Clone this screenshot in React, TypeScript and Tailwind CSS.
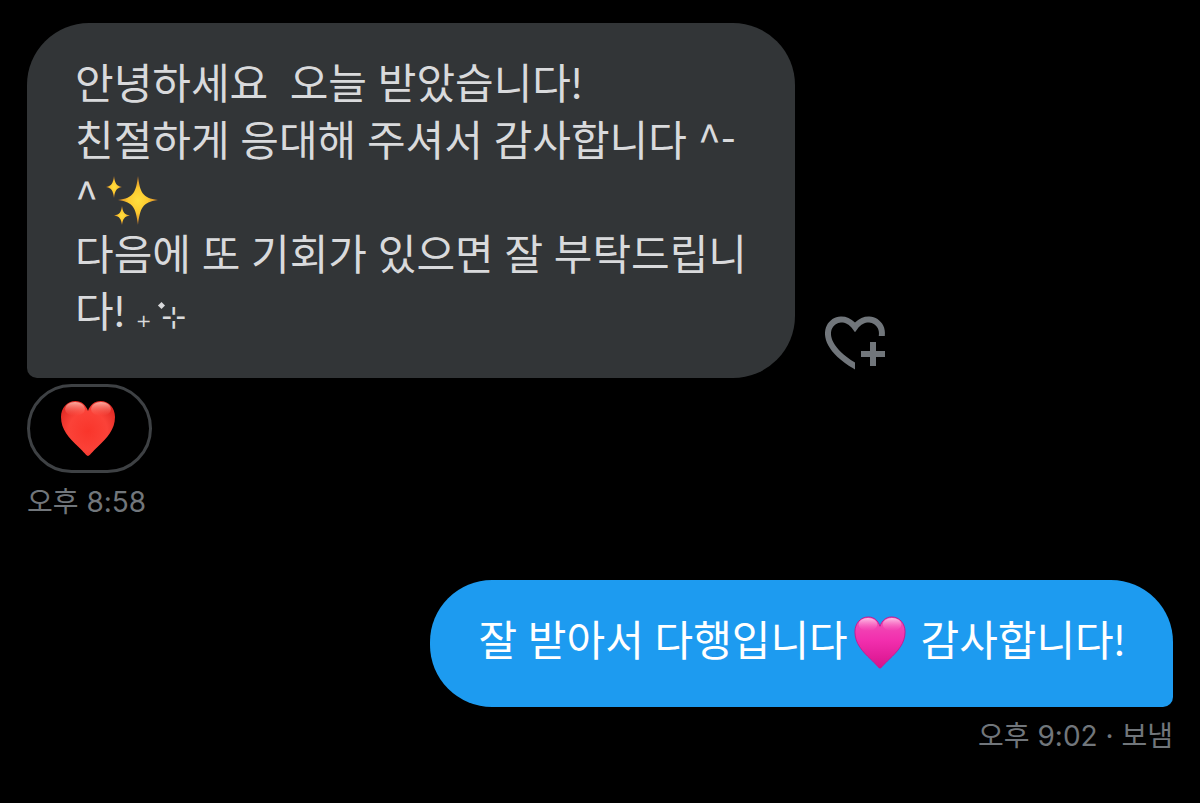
import { useId } from 'react'
import type { ReactNode } from 'react'
import { clsx } from 'clsx'

type BubbleProps = {
  side: 'in' | 'out'
  children: ReactNode
}

const HEART_PATH =
  'M28 56C26.500 56 24 52 18 46.500C9 38 1 29.500 1 17C1 8 7 1 15.500 1C21.500 1 26 5 28 11C30 5 34.500 1 40.500 1C49 1 55 8 55 17C55 29.500 47 38 38 46.500C32 52 29.500 56 28 56Z'

function RedHeart({ className }: { className?: string }) {
  const id = useId()
  return (
    <svg viewBox="0 0 56 57" className={className} role="img" aria-label="❤️">
      <defs>
        <radialGradient id={`${id}-fill`} cx="50%" cy="55%" r="60%">
          <stop offset="0" stopColor="#f9352b" />
          <stop offset="0.6" stopColor="#fb4238" />
          <stop offset="1" stopColor="#e22b25" />
        </radialGradient>
        <linearGradient id={`${id}-shine`} x1="0" y1="0" x2="0" y2="1">
          <stop offset="0" stopColor="#ffc4b8" stopOpacity="0.85" />
          <stop offset="1" stopColor="#ff6a5c" stopOpacity="0" />
        </linearGradient>
      </defs>
      <path d={HEART_PATH} fill={`url(#${id}-fill)`} />
      <ellipse cx="15" cy="9" rx="10" ry="7" fill={`url(#${id}-shine)`} />
      <ellipse cx="41" cy="9" rx="10" ry="7" fill={`url(#${id}-shine)`} />
    </svg>
  )
}

function PinkHeart({ className }: { className?: string }) {
  const id = useId()
  return (
    <svg viewBox="0 0 56 57" className={className} role="img" aria-label="🩷">
      <defs>
        <linearGradient id={`${id}-fill`} x1="0" y1="0" x2="0" y2="1">
          <stop offset="0" stopColor="#f254b8" />
          <stop offset="0.45" stopColor="#f22fae" />
          <stop offset="1" stopColor="#d8128c" />
        </linearGradient>
        <linearGradient id={`${id}-shine`} x1="0" y1="0" x2="0" y2="1">
          <stop offset="0" stopColor="#ffd0ec" stopOpacity="0.9" />
          <stop offset="1" stopColor="#ff70c8" stopOpacity="0" />
        </linearGradient>
      </defs>
      <path d={HEART_PATH} fill={`url(#${id}-fill)`} stroke="#c9178d" />
      <ellipse cx="15" cy="9" rx="10" ry="7" fill={`url(#${id}-shine)`} />
      <ellipse cx="41" cy="9" rx="10" ry="7" fill={`url(#${id}-shine)`} />
    </svg>
  )
}

function Sparkles({ className }: { className?: string }) {
  const id = useId()
  return (
    <svg viewBox="0 0 52 50" className={className} role="img" aria-label="✨">
      <defs>
        <radialGradient id={id}>
          <stop offset="0" stopColor="#ffdf3e" />
          <stop offset="0.5" stopColor="#fdc92f" />
          <stop offset="1" stopColor="#c9792a" />
        </radialGradient>
      </defs>
      <g fill={`url(#${id})`}>
        <path d="M32 0C34 16 36 22 52 24C36 26 34 33 32 49C30 33 28 26 12 24C28 22 30 16 32 0Z" />
        <path d="M8 0C9 7 10 10 16 11C10 12 9 15 8 22C7 15 6 12 0 11C6 10 7 7 8 0Z" />
        <path d="M16 30C17 36 18 38.500 24 39.500C18 40.500 17 43 16 49C15 43 14 40.500 8 39.500C14 38.500 15 36 16 30Z" />
      </g>
    </svg>
  )
}

function HeartPlusIcon() {
  return (
    <svg viewBox="0 0 24 24" className="size-[72px]" fill="currentColor" aria-hidden="true">
      <path d="M17 12v3h-2.998v2h3v3h2v-3h3v-2h-3.001v-3H17zm-5 6.839c-3.871-2.34-6.053-4.639-7.127-6.609-1.112-2.04-1.031-3.7-.479-4.82.561-1.13 1.667-1.84 2.91-1.91 1.222-.06 2.68.51 3.892 2.16l.806 1.09.805-1.09c1.211-1.65 2.668-2.22 3.89-2.16 1.242.07 2.347.78 2.908 1.91.334.677.49 1.554.321 2.59h2.011c.153-1.283-.039-2.469-.539-3.48-.887-1.79-2.647-2.91-4.601-3.01-1.65-.09-3.367.56-4.796 2.01-1.43-1.45-3.147-2.1-4.798-2.01-1.954.1-3.714 1.22-4.601 3.01-.896 1.81-.846 4.17.514 6.67 1.353 2.48 4.003 5.12 8.382 7.67l.502.299v-2.32z" />
    </svg>
  )
}

function Bubble({ side, children }: BubbleProps) {
  return (
    <div
      className={clsx(
        'max-w-[67%] whitespace-pre-wrap rounded-[62px] pl-12 pt-8 pb-[38px] text-[42px] leading-[57px]',
        side === 'in' && 'rounded-bl-[10px] bg-[#323537] pr-11 text-[#d9dadc]',
        side === 'out' && 'rounded-br-[10px] bg-[#1d9bf0] pr-12 text-white',
      )}
    >
      {children}
    </div>
  )
}

function Meta({ children }: { children: ReactNode }) {
  return (
    <p className="mt-[9px] font-['Inter','Noto_Sans_CJK_KR',sans-serif] text-[28px] leading-10 text-[#71767b]">
      {children}
    </p>
  )
}

export default function App() {
  return (
    <main
      lang="ko"
      className="flex min-h-screen flex-col gap-[58px] bg-black px-[27px] pt-[23px] font-['Lato','Noto_Sans_CJK_KR',sans-serif]"
    >
      <article className="flex flex-col items-start">
        <div className="flex w-full items-end gap-6">
          <Bubble side="in">
            <p>안녕하세요{'  '}오늘 받았습니다!</p>
            <p>
              친절하게 응대해 주셔서 감사합니다{' '}
              <span className="font-['Noto_Sans_CJK_KR',sans-serif] leading-none">^-^</span>
              <Sparkles className="-my-2 ml-2 inline-block h-[50px] w-[52px] align-[-5px]" />
            </p>
            <p>
              다음에 또 기회가 있으면 잘 부탁드립니다!{' '}
              <span className="relative font-['DejaVu_Sans',sans-serif] text-[30px] leading-none">
                ₊ ⊹
                <span className="absolute top-1 right-5.5 size-[5px] rotate-45 bg-current" />
              </span>
            </p>
          </Bubble>
          <button type="button" aria-label="반응 추가" className="shrink-0 text-[#71767b]">
            <HeartPlusIcon />
          </button>
        </div>
        <button
          type="button"
          className="mt-1.5 flex h-[89px] w-[125px] items-center justify-center rounded-full border-3 border-[#3e4144] pr-1"
        >
          <RedHeart className="h-[57px] w-14" />
        </button>
        <Meta>오후 8:58</Meta>
      </article>

      <article className="flex flex-col items-end">
        <Bubble side="out">
          <p>
            잘 받아서 다행입니다
            <PinkHeart className="-my-2 mr-1 ml-1.5 inline-block h-[53px] w-[52px] align-[-5px]" />
            {' '}감사합니다!
          </p>
        </Bubble>
        <Meta>오후 9:02 · 보냄</Meta>
      </article>
    </main>
  )
}
